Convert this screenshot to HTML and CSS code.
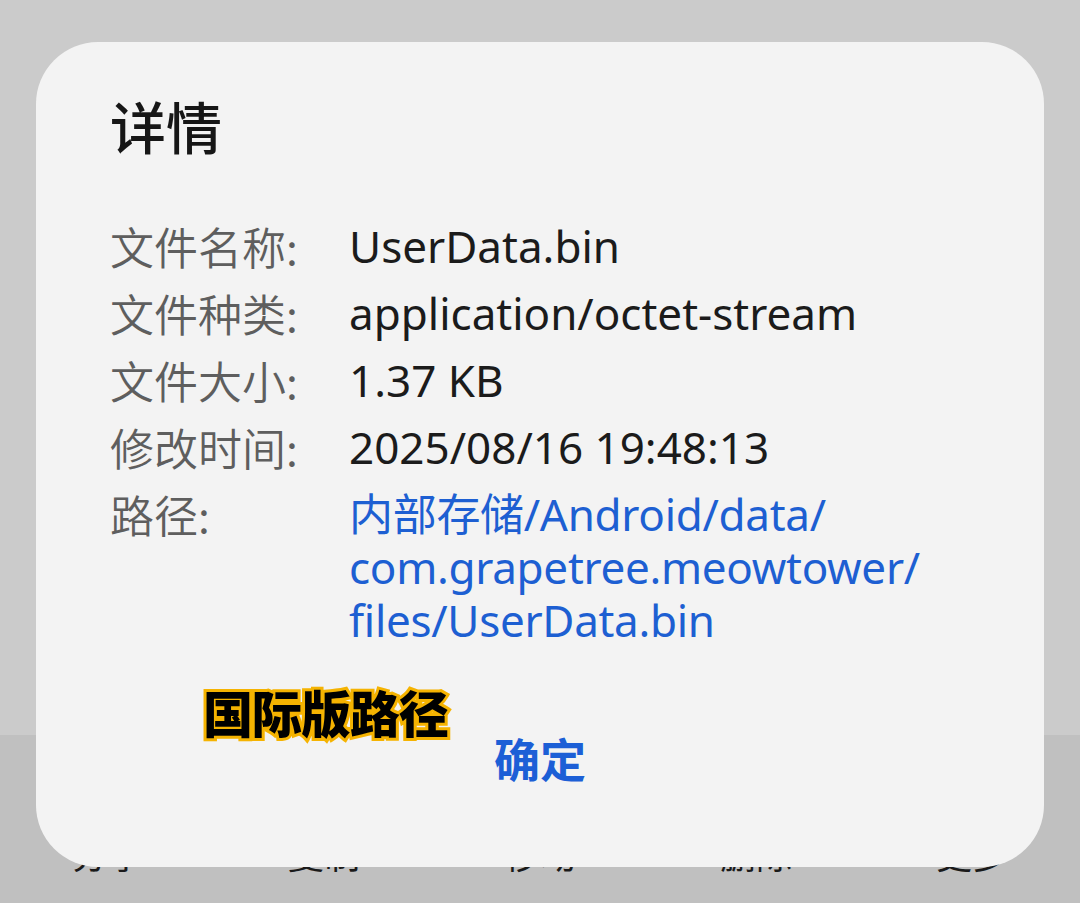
FILE: index.html
```html
<!DOCTYPE html>
<html lang="zh-CN">
<head>
<meta charset="utf-8">
<link rel="stylesheet" href="styles.css">
</head>
<body>
<div class="screen">
  <div class="top-area"></div>
  <div class="toolbar">
    <span class="tool">分享</span>
    <span class="tool">复制</span>
    <span class="tool">移动</span>
    <span class="tool">删除</span>
    <span class="tool">更多</span>
  </div>

  <div class="dialog">
    <div class="title">详情</div>
    <div class="details">
      <div class="label">文件名称:</div>
      <div class="value">UserData.bin</div>
      <div class="label">文件种类:</div>
      <div class="value">application/octet-stream</div>
      <div class="label">文件大小:</div>
      <div class="value">1.37 KB</div>
      <div class="label">修改时间:</div>
      <div class="value">2025/08/16 19:48:13</div>
      <div class="label">路径:</div>
      <div class="value link">内部存储/Android/data/<br>com.grapetree.meowtower/<br>files/UserData.bin</div>
    </div>
    <div class="actions">
      <span class="ok">确定</span>
    </div>
  </div>

  <div class="sticker">国际版路径</div>
</div>
</body>
</html>
```

FILE: styles.css
```css
html, body {
  margin: 0;
  padding: 0;
}
body {
  width: 1080px;
  height: 903px;
  overflow: hidden;
  font-family: "Noto Sans", "Noto Sans CJK SC", sans-serif;
}
.screen {
  position: relative;
  width: 1080px;
  height: 903px;
  display: flex;
  flex-direction: column;
}
.top-area {
  height: 735px;
  background: #cbcbcb;
}
.toolbar {
  flex: 1;
  background: #c0c0c0;
  display: grid;
  grid-template-columns: repeat(5, 1fr);
  padding-top: 100px;
}
.tool {
  text-align: center;
  font-family: "Noto Sans CJK SC", sans-serif;
  font-size: 36px;
  line-height: 36px;
  color: #1a1a1a;
}
.dialog {
  position: absolute;
  left: 36px;
  top: 42px;
  width: 1008px;
  height: 825px;
  box-sizing: border-box;
  background: #f3f3f3;
  border-radius: 62px;
  padding: 55px 74px 0 74px;
}
.title {
  font-family: "Noto Sans CJK SC", sans-serif;
  font-weight: 500;
  font-size: 56px;
  line-height: 56px;
  color: #161616;
}
.details {
  margin-top: 67px;
  display: grid;
  grid-template-columns: 239px 1fr;
  row-gap: 14px;
  font-size: 44px;
  line-height: 53px;
}
.label {
  font-family: "Noto Sans CJK SC", sans-serif;
  font-weight: 350;
  color: #5e5e5e;
}
.value {
  font-family: "Noto Sans", "Noto Sans CJK SC", sans-serif;
  color: #1b1b1b;
  white-space: nowrap;
}
.link {
  color: #1d5fd2;
  letter-spacing: -0.3px;
}
.actions {
  margin-top: 84px;
  text-align: center;
  margin-left: -74px;
  margin-right: -74px;
}
.ok {
  font-family: "Noto Sans CJK SC", sans-serif;
  font-weight: 600;
  font-size: 46px;
  line-height: 53px;
  color: #1c5fd6;
}
.sticker {
  position: absolute;
  left: 203px;
  top: 681px;
  font-family: "Noto Sans CJK SC", sans-serif;
  font-weight: 900;
  font-size: 50px;
  line-height: 60px;
  letter-spacing: -1px;
  color: #000;
  -webkit-text-stroke: 6px #f5b301;
  paint-order: stroke fill;
}
```
